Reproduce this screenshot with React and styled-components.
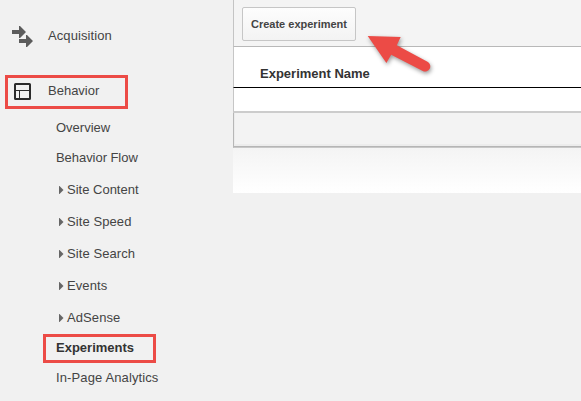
import React from "react";
import styled, { createGlobalStyle } from "styled-components";

const GlobalStyle = createGlobalStyle`
  * { box-sizing: border-box; }
  body { margin: 0; background: #f1f1f1; }
`;

const Page = styled.div`
  position: relative;
  display: flex;
  width: 581px;
  height: 401px;
  overflow: hidden;
  background: #f1f1f1;
  color: #444;
  font: 13px/16px "Liberation Sans", Arial, sans-serif;
`;

const Sidebar = styled.nav`
  width: 233px;
  flex: none;
  display: flex;
  flex-direction: column;
  align-items: flex-start;
  padding: 19px 0 0 5px;
`;

const Section = styled.div`
  display: flex;
  align-items: center;
  width: 123px;
  height: 34px;
  margin-bottom: ${(p) => (p.$marked ? 4 : 22)}px;
  padding-bottom: ${(p) => (p.$marked ? 2 : 0)}px;
  border: 3px solid ${(p) => (p.$marked ? "#ec4b46" : "transparent")};
  letter-spacing: ${(p) => (p.$marked ? 0 : 0.09)}px;
`;

const IconSlot = styled.span`
  display: flex;
  width: 40px;
  flex: none;
  padding-left: ${(p) => p.$inset}px;
`;

const SubNav = styled.ul`
  list-style: none;
  margin: 0;
  padding: 0 0 0 38px;
`;

const SubItem = styled.li`
  display: flex;
  align-items: center;
  width: 113px;
  height: ${(p) => (p.$group ? 32 : p.$marked ? 29 : 30)}px;
  padding-left: ${(p) => (p.$marked ? 10 : p.$group ? 16 : 13)}px;
  padding-bottom: ${(p) => (p.$marked ? 2 : 0)}px;
  border: ${(p) => (p.$marked ? "3px solid #ec4b46" : "0")};
  color: ${(p) => (p.$marked ? "#333" : "#444")};
  font-weight: ${(p) => (p.$marked ? 700 : 400)};
  letter-spacing: ${(p) => p.$tracking || 0}px;
  white-space: nowrap;

  &:nth-child(3) { margin-top: 1px; }
`;

const Caret = styled.svg`
  flex: none;
  width: 5px;
  height: 8px;
  margin-right: 3px;
  fill: #666;
`;

const Main = styled.main`
  flex: 1;
`;

const Toolbar = styled.div`
  height: 47px;
  padding: 7px 0 0 8px;
  background: #f4f4f4;
  border-left: 1px solid #c4c4c4;
  border-bottom: 1px solid #b8b8b8;
`;

const Button = styled.button`
  width: 114px;
  height: 34px;
  padding: 0;
  border: 1px solid #c6c6c6;
  border-radius: 2px;
  background: linear-gradient(#fdfdfd, #f3f3f3);
  color: #444;
  font: bold 11px/16px "Liberation Sans", Arial, sans-serif;
  white-space: nowrap;
`;

const TableHead = styled.div`
  height: 41px;
  padding: 19px 0 0 26px;
  background: #fff;
  border-left: 1px solid #c6c6c6;
  border-bottom: 1px solid #000;
  color: #333;
  font-weight: 700;
`;

const TableBody = styled.div`
  height: 25px;
  background: #fff;
  border-left: 1px solid #c6c6c6;
  border-bottom: 2px solid #ccc;
`;

const TableFooter = styled.div`
  height: 35px;
  background: #f3f3f3;
  border-left: 1px solid #b7b7b7;
  border-bottom: 1px solid #c8c8c8;
  box-shadow: inset 0 -1px #b5b5b5, inset 1px -3px #ececec;
`;

const Fade = styled.div`
  height: 45px;
  background: linear-gradient(#f4f4f4, #fff);
`;

const Pointer = styled.svg`
  position: absolute;
  left: 360px;
  top: 28px;
  filter: drop-shadow(1px 2px 2px rgba(0, 0, 0, 0.4));
`;

const items = [
  { label: "Overview" },
  { label: "Behavior Flow", tracking: -0.05 },
  { label: "Site Content", group: true },
  { label: "Site Speed", group: true, tracking: 0.09 },
  { label: "Site Search", group: true, tracking: 0.09 },
  { label: "Events", group: true, tracking: 0.09 },
  { label: "AdSense", group: true, tracking: 0.09 },
  { label: "Experiments", marked: true },
  { label: "In-Page Analytics", tracking: 0.12 },
];

function ArrowsIcon() {
  return (
    <svg width="24" height="24" viewBox="0 0 24 24" fill="#5c5c5c">
      <path d="M1 6h7V2h1l6 6-6 6H8v-4H1zM8 15h7v-4h1l6 6-6 6h-1v-4H8z" />
    </svg>
  );
}

function LayoutIcon() {
  return (
    <svg width="17" height="17" viewBox="0 0 17 17" fill="none" stroke="#2b2b2b">
      <rect x="1" y="1" width="15" height="15" rx="0.5" strokeWidth="2" />
      <path d="M2 7.5h13M5.5 8v7" />
    </svg>
  );
}

export default function App() {
  return (
    <>
      <GlobalStyle />
      <Page>
        <Sidebar>
          <Section>
            <IconSlot $inset={3}><ArrowsIcon /></IconSlot>
            Acquisition
          </Section>
          <Section $marked>
            <IconSlot $inset={6}><LayoutIcon /></IconSlot>
            Behavior
          </Section>
          <SubNav>
            {items.map(({ label, group, marked, tracking }) => (
              <SubItem key={label} $group={group} $marked={marked} $tracking={tracking}>
                {group && <Caret viewBox="0 0 5 8"><path d="M0 0h.5l4 4-4 4H0z" /></Caret>}
                {label}
              </SubItem>
            ))}
          </SubNav>
        </Sidebar>
        <Main>
          <Toolbar><Button>Create experiment</Button></Toolbar>
          <TableHead>Experiment Name</TableHead>
          <TableBody />
          <TableFooter />
          <Fade />
        </Main>
        <Pointer width="76" height="52" viewBox="0 0 76 52">
          <path
            d="M7.7 8 40.7 9 36.8 17.3 67.5 33.8A5 5 0 0 1 62.8 42.9L31.2 26.8 26.4 35Z"
            fill="#ec4b46"
          />
        </Pointer>
      </Page>
    </>
  );
}
